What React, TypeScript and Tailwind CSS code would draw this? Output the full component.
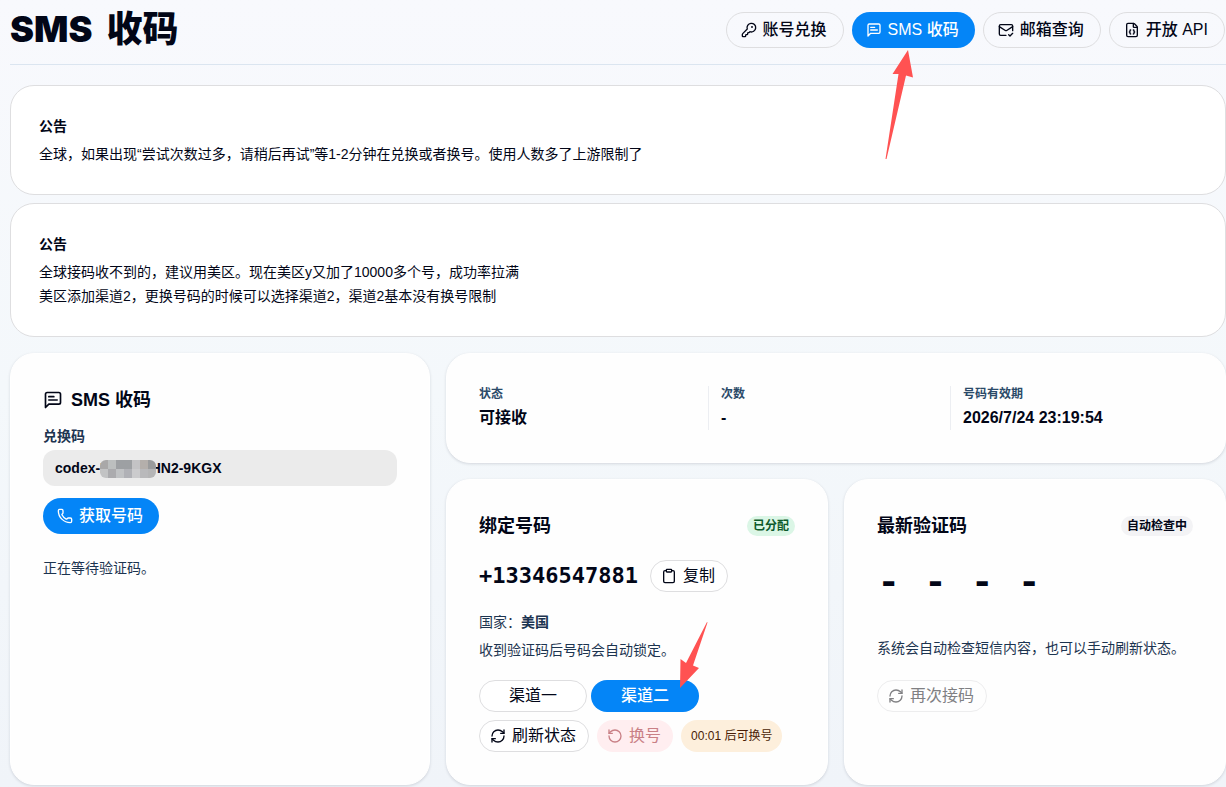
import type { ComponentProps, ReactNode } from "react";
import { Clipboard, FileBraces, KeyRound, MailCheck, Phone, RefreshCw, RotateCcw } from "lucide-react";
import clsx from "clsx";

const MOSAIC = [
  ["#a9a8a8", "#bcbfbf", "#9da0a3", "#9da0a3", "#c3c3c5", "#b4afab", "#9a9b9c"],
  ["#c2c3c4", "#ababae", "#c0c2c4", "#b0b1b6", "#cbcbcd", "#b9b9bb", "#b5b5b6"],
];

const stats = [
  { label: "状态", value: "可接收" },
  { label: "次数", value: "-" },
  { label: "号码有效期", value: "2026/7/24 23:19:54" },
];

const notices = [
  ["全球，如果出现“尝试次数过多，请稍后再试”等1-2分钟在兑换或者换号。使用人数多了上游限制了"],
  [
    "全球接码收不到的，建议用美区。现在美区y又加了10000多个号，成功率拉满",
    "美区添加渠道2，更换号码的时候可以选择渠道2，渠道2基本没有换号限制",
  ],
];

const MessageIcon = ({ size, className }: { size: number; className?: string }) => (
  <svg
    width={size}
    height={size}
    viewBox="0 0 24 24"
    fill="none"
    stroke="currentColor"
    strokeWidth="2"
    strokeLinecap="round"
    strokeLinejoin="round"
    className={className}
  >
    <path d="M21 15a2 2 0 0 1-2 2H7l-4 4V5a2 2 0 0 1 2-2h14a2 2 0 0 1 2 2z" />
    <path d="M13 8H7" />
    <path d="M17 12H7" />
  </svg>
);

const NavLink = ({ active, children }: { active?: boolean; children: ReactNode }) => (
  <a
    href="#"
    className={clsx(
      "flex h-9 items-center gap-2 rounded-full px-4 whitespace-nowrap text-base font-medium",
      active ? "bg-[#0485f7] text-white" : "border border-[#dedee0]"
    )}
  >
    {children}
  </a>
);

const PillButton = ({ className, ...props }: ComponentProps<"button">) => (
  <button
    type="button"
    className={clsx(
      "flex h-8 items-center justify-center gap-2 rounded-full px-3 whitespace-nowrap text-base",
      className
    )}
    {...props}
  />
);

const Card = ({ className, children }: { className?: string; children: ReactNode }) => (
  <section
    className={clsx(
      "rounded-[24px] border border-white bg-[#fefefe] p-8 shadow-[0_1px_3px_rgba(15,23,42,0.14)]",
      className
    )}
  >
    {children}
  </section>
);

const App = () => {
  return (
    <div className="relative min-h-screen bg-linear-to-b from-[#f8f9fd] via-[#f4f8fb] to-[#f0f4f9] pb-0.5 pl-2.5 font-['Liberation_Sans','Noto_Sans_CJK_SC',sans-serif] text-[#020617]">
      <header className="flex h-[65px] items-start justify-between border-b border-[#dbe5f0] pr-px">
        <h1 className="mt-2 flex gap-3.5 text-4xl leading-[42px] font-black font-['Inter','Noto_Sans_CJK_SC',sans-serif]">
          <span>SMS</span>
          <span>收码</span>
        </h1>
        <nav className="mt-3 flex gap-2">
          <NavLink>
            <KeyRound size={16} className="-mx-0.5" />
            账号兑换
          </NavLink>
          <NavLink active>
            <MessageIcon size={16} className="-mx-0.5" />
            SMS 收码
          </NavLink>
          <NavLink>
            <MailCheck size={16} className="-mx-0.5" />
            邮箱查询
          </NavLink>
          <NavLink>
            <FileBraces size={16} className="-mx-0.5" />
            开放 API
          </NavLink>
        </nav>
      </header>

      <main>
        <div className="mt-5 flex flex-col gap-2">
          {notices.map((lines, index) => (
            <section
              key={index}
              className="rounded-[24px] border border-[#dedee0] bg-white p-7 text-sm leading-6"
            >
              <h2 className="mb-1 font-bold">公告</h2>
              {lines.map((line) => (
                <p key={line}>{line}</p>
              ))}
            </section>
          ))}
        </div>

        <div className="mt-4 grid grid-cols-[420px_1fr] gap-4">
          <Card>
            <h2 className="flex items-center gap-2 text-lg leading-7 font-bold">
              <MessageIcon size={20} />
              SMS 收码
            </h2>
            <label htmlFor="code" className="mt-3 block text-sm leading-5 font-bold text-[#1c3450]">
              兑换码
            </label>
            <div className="relative mt-1">
              <input
                id="code"
                readOnly
                value="codex-HHHHHHN2-9KGX"
                className="h-9 w-full rounded-xl bg-[#ebebeb] px-3 text-sm font-bold"
              />
              <div className="absolute top-2.5 left-[57px] grid w-14 grid-cols-7 overflow-hidden rounded-md">
                {MOSAIC.flat().map((color, i) => (
                  <span key={i} className="h-[9px]" style={{ backgroundColor: color }} />
                ))}
              </div>
            </div>
            <button
              type="button"
              className="mt-3 flex h-9 items-center gap-2 rounded-full bg-[#0485f7] px-4 text-base font-medium text-white"
            >
              <Phone size={16} className="-mx-0.5" />
              获取号码
            </button>
            <p className="mt-6 text-sm leading-5 text-[#1c3450]">正在等待验证码。</p>
          </Card>

          <div className="flex flex-col gap-4">
            <Card>
              <dl className="grid grid-cols-3 gap-3">
                {stats.map(({ label, value }) => (
                  <div key={label} className="border-r border-[#eceef2] last:border-r-0">
                    <dt className="text-xs leading-4 font-bold text-[#2b4a69]">{label}</dt>
                    <dd className="mt-1 text-base leading-6 font-bold">{value}</dd>
                  </div>
                ))}
              </dl>
            </Card>

            <div className="grid grid-cols-2 gap-4">
              <Card>
                <div className="flex items-center justify-between">
                  <h2 className="text-lg leading-7 font-bold">绑定号码</h2>
                  <span className="rounded-full bg-[#dbf6e6] px-1.5 text-xs leading-5 font-bold text-[#0d5a2b]">
                    已分配
                  </span>
                </div>
                <div className="mt-5 flex items-center gap-3">
                  <span className="font-['DejaVu_Sans_Mono',monospace] text-[22px] leading-8 font-bold">
                    +13346547881
                  </span>
                  <PillButton className="border border-[#dedee0] bg-white">
                    <Clipboard size={16} className="-mx-0.5" />
                    复制
                  </PillButton>
                </div>
                <div className="mt-5 flex flex-col gap-2 text-sm leading-5 text-[#1c3450]">
                  <p>
                    国家：<strong>美国</strong>
                  </p>
                  <p>收到验证码后号码会自动锁定。</p>
                </div>
                <div className="mt-5 flex gap-1">
                  <PillButton className="w-27 border border-[#dedee0] bg-white">渠道一</PillButton>
                  <PillButton className="w-27 bg-[#0485f7] font-medium text-white">渠道二</PillButton>
                </div>
                <div className="mt-2 flex gap-2">
                  <PillButton className="border border-[#dedee0] bg-white">
                    <RefreshCw size={16} className="-mx-0.5" />
                    刷新状态
                  </PillButton>
                  <PillButton disabled className="bg-[#ffeef0] text-[#c98086]">
                    <RotateCcw size={16} className="-mx-0.5" />
                    换号
                  </PillButton>
                  <span className="flex items-center rounded-full bg-[#fdefdc] px-2.5 text-xs whitespace-nowrap text-[#4a1d05]">
                    00:01 后可换号
                  </span>
                </div>
              </Card>

              <Card>
                <div className="flex items-center justify-between">
                  <h2 className="text-lg leading-7 font-bold">最新验证码</h2>
                  <span className="rounded-full bg-[#f3f3f5] px-1.5 text-xs leading-5 font-bold">
                    自动检查中
                  </span>
                </div>
                <div className="mt-5 font-['Liberation_Mono',monospace] text-[39px] leading-12 font-bold">
                  - - - -
                </div>
                <p className="mt-[30px] text-sm leading-5 text-[#1c3450]">
                  系统会自动检查短信内容，也可以手动刷新状态。
                </p>
                <PillButton disabled className="mt-[22px] border border-[#ededee] text-[#808083]">
                  <RefreshCw size={16} className="-mx-0.5" />
                  再次接码
                </PillButton>
              </Card>
            </div>
          </div>
        </div>
      </main>

      {/* pointer arrows over the selected controls */}
      <svg
        viewBox="0 0 28 110"
        className="pointer-events-none absolute top-[50px] right-[313px] h-[110px] w-7 fill-[#ff5252]"
      >
        <path d="M23 0L28 27.500L21 25.500L1.500 109L0.500 109L13.500 24L7.500 24Z" />
      </svg>
      <svg
        viewBox="0 0 29 66"
        className="pointer-events-none absolute top-[622px] left-[679px] h-[66px] w-[29px] fill-[#ff5252]"
      >
        <path d="M28 0L28.500 0.500L14 43.500L20 46L1 66L1.500 37L7 41Z" />
      </svg>
    </div>
  );
};

export default App;
